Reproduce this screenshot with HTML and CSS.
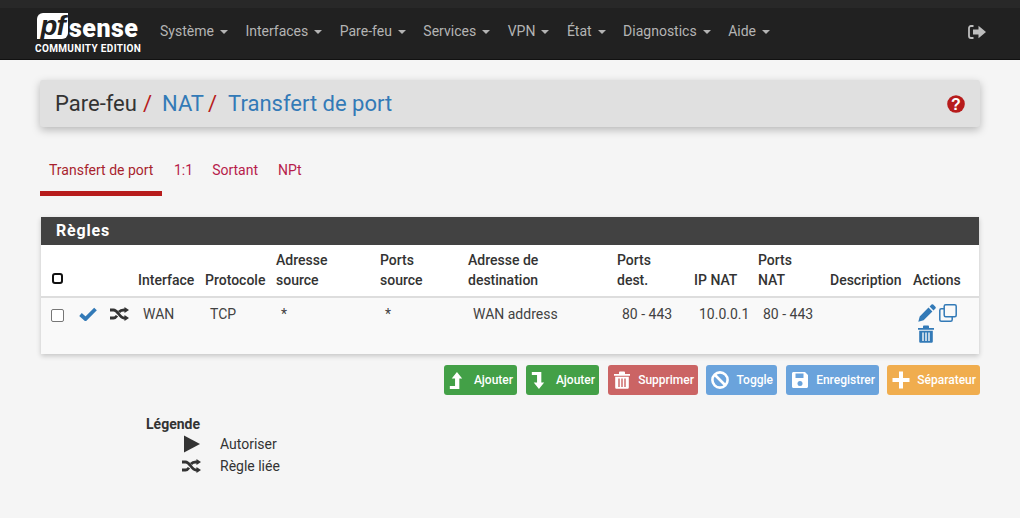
FILE: index.html
```html
<!DOCTYPE html>
<html lang="fr">
<head>
    <meta charset="UTF-8">
    <title>Transfert de port</title>
    <link rel="stylesheet" href="styles.css">
</head>
<body>
    <nav class="navbar">
        <div class="logo">
            <div class="logo-top"><span class="logo-pf">pf</span><span class="logo-sense">sense</span></div>
            <div class="logo-sub">COMMUNITY EDITION</div>
        </div>
        <ul class="menu">
            <li>Système<i class="caret"></i></li>
            <li>Interfaces<i class="caret"></i></li>
            <li>Pare-feu<i class="caret"></i></li>
            <li>Services<i class="caret"></i></li>
            <li>VPN<i class="caret"></i></li>
            <li>État<i class="caret"></i></li>
            <li>Diagnostics<i class="caret"></i></li>
            <li>Aide<i class="caret"></i></li>
        </ul>
        <svg class="logout" viewBox="0 0 18 14"><path d="M5.500 1H3C1.800 1 1 1.800 1 3v8c0 1.200.8 2 2 2h2.500" fill="none" stroke="currentColor" stroke-width="1.800"/><path d="M5 4.500h5.500V.8L18 7l-7.500 6.200V9.500H5z" fill="currentColor"/></svg>
    </nav>

    <main class="container">
        <header class="breadcrumb">
            <h1><span>Pare-feu</span><em>/</em><a>NAT</a><em>/</em><a>Transfert de port</a></h1>
            <svg class="help" viewBox="0 0 18 18"><circle cx="9" cy="9" r="8.800" fill="#b71c1c"/><text x="9" y="14.500" text-anchor="middle" class="help-mark">?</text></svg>
        </header>

        <ul class="tabs">
            <li class="active">Transfert de port</li>
            <li class="tab-short">1:1</li>
            <li>Sortant</li>
            <li>NPt</li>
        </ul>

        <section class="panel">
            <h2>Règles</h2>
            <table>
                <colgroup>
                    <col class="c-check"><col class="c-state"><col class="c-type"><col class="c-if"><col class="c-proto">
                    <col class="c-src"><col class="c-sport"><col class="c-dst"><col class="c-dport"><col class="c-ip">
                    <col class="c-nport"><col class="c-desc"><col class="c-act">
                </colgroup>
                <thead>
                    <tr>
                        <th class="first"><span class="check-all"></span></th>
                        <th></th>
                        <th></th>
                        <th>Interface</th>
                        <th>Protocole</th>
                        <th>Adresse<br>source</th>
                        <th>Ports<br>source</th>
                        <th>Adresse de<br>destination</th>
                        <th>Ports<br>dest.</th>
                        <th>IP NAT</th>
                        <th>Ports<br>NAT</th>
                        <th>Description</th>
                        <th>Actions</th>
                    </tr>
                </thead>
                <tbody>
                    <tr>
                        <td class="first"><span class="checkbox"></span></td>
                        <td class="icon-cell"><svg class="ico-check" viewBox="0 0 18 14"><path d="M1.500 7.500 6.500 12 16.500 2" fill="none" stroke="#337ab7" stroke-width="3.800"/></svg></td>
                        <td class="icon-cell"><svg class="ico-random" viewBox="0 0 19 14"><use href="#random"/></svg></td>
                        <td>WAN</td>
                        <td>TCP</td>
                        <td>*</td>
                        <td>*</td>
                        <td>WAN address</td>
                        <td>80 - 443</td>
                        <td>10.0.0.1</td>
                        <td>80 - 443</td>
                        <td></td>
                        <td class="actions">
                            <svg class="ico-act" viewBox="0 0 18 18"><path d="M13.500.6a1.200 1.200 0 0 1 1.700 0l2.200 2.200a1.200 1.200 0 0 1 0 1.700l-1.900 1.900-3.900-3.900zM10.500 3.600l3.900 3.900-8.800 8.800-5.300 1.500 1.400-5.400z" fill="#337ab7"/></svg>
                            <svg class="ico-act" viewBox="0 0 18 18"><rect x="5.200" y=".8" width="12" height="12" rx="1.500" fill="none" stroke="#337ab7" stroke-width="1.500"/><path d="M5.200 4.800H2.300C1.400 4.800.8 5.400.8 6.300v9.400c0 .9.600 1.500 1.500 1.500h9.400c.9 0 1.500-.6 1.500-1.500v-2.900" fill="none" stroke="#337ab7" stroke-width="1.500"/></svg>
                            <svg class="ico-act ico-bin" viewBox="0 0 18 18"><use href="#trash" class="trash-blue"/></svg>
                        </td>
                    </tr>
                </tbody>
            </table>
        </section>

        <div class="buttons">
            <button class="btn green"><svg class="lvl" viewBox="0 0 14 20"><path d="M8 1 13.500 8H10.500v11H.5v-3.200H6V8H2.500z" fill="#fff"/></svg>Ajouter</button>
            <button class="btn green"><svg class="lvl" viewBox="0 0 14 20"><path d="M.5 1h10v11h3L8 19 2.500 12H6V4.200H.5z" fill="#fff"/></svg>Ajouter</button>
            <button class="btn red"><svg viewBox="0 0 18 18"><use href="#trash" class="trash-white"/></svg>Supprimer</button>
            <button class="btn blue"><svg viewBox="0 0 18 18"><circle cx="9" cy="9" r="7.600" fill="none" stroke="#fff" stroke-width="2.600"/><path d="M4 4l10 10" stroke="#fff" stroke-width="2.600"/></svg>Toggle</button>
            <button class="btn blue"><svg viewBox="0 0 18 18"><path d="M2.500 1H14l3 3v11.500c0 .8-.7 1.500-1.500 1.500h-13C1.700 17 1 16.300 1 15.500v-13C1 1.700 1.700 1 2.500 1zM4.500 2.500V7h8V2.500z" fill="#fff" fill-rule="evenodd"/><circle cx="9" cy="12.500" r="2.500" fill="#6aa3dc"/></svg>Enregistrer</button>
            <button class="btn orange"><svg viewBox="0 0 18 18"><path d="M7 .5h4V7h6.500v4H11v6.500H7V11H.5V7H7z" fill="#fff"/></svg>Séparateur</button>
        </div>

        <div class="legend">
            <strong>Légende</strong>
            <div class="legend-row"><svg viewBox="0 0 18 18" class="ico-play"><path d="M2 .5 18 9 2 17.500z" fill="#333"/></svg><span>Autoriser</span></div>
            <div class="legend-row"><svg viewBox="0 0 19 14" class="ico-random"><use href="#random"/></svg><span>Règle liée</span></div>
        </div>
    </main>

    <svg class="defs">
        <defs>
            <g id="random">
                <path d="M0 3h3.500C8 3 9.500 11 14 11h1" fill="none" stroke="#333" stroke-width="2.800"/>
                <path d="M0 11h3.500c1.500 0 2.700-1 3.500-2.200M9 5c1-1.200 2.500-2 5-2h1" fill="none" stroke="#333" stroke-width="2.800"/>
                <path d="M14.500 0l4.500 3-4.500 3zM14.500 8l4.500 3-4.500 3z" fill="#333"/>
            </g>
            <g id="trash">
                <path d="M1 3h5V1.500C6 1 6.500 .5 7 .5h4c.5 0 1 .5 1 1V3h5v1.800H1z" fill="currentColor"/>
                <path d="M2.200 5.800h13.600v10.700c0 .7-.6 1.300-1.300 1.300h-11c-.7 0-1.300-.6-1.300-1.300zM5.300 7.500v8.500h1.400V7.500zM8.300 7.500v8.500h1.400V7.500zM11.300 7.500v8.500h1.400V7.500z" fill="currentColor" fill-rule="evenodd"/>
            </g>
        </defs>
    </svg>
</body>
</html>
```

FILE: styles.css
```css
* {
    box-sizing: border-box;
}
body {
    margin: 0;
    font-family: Roboto, sans-serif;
    font-size: 14px;
    color: #333;
    background-color: #f5f5f5;
}
.defs {
    display: none;
}
.navbar {
    display: flex;
    align-items: center;
    height: 60px;
    padding: 8px 34px 0 35px;
    background: linear-gradient(to bottom, #282828 0, #282828 8px, #212121 8px);
    border-bottom: 1px solid #111;
}
.logo {
    width: 107px;
    color: #fff;
}
.logo-top {
    display: flex;
    align-items: flex-end;
    height: 26px;
    margin-bottom: 4px;
    padding-left: 2px;
}
.logo-pf {
    width: 31px;
    height: 26px;
    background-color: #fff;
    border-radius: 6px 0 6px 0;
    color: #212121;
    font-family: "Liberation Sans", sans-serif;
    font-size: 28px;
    font-style: italic;
    font-weight: bold;
    line-height: 25px;
    text-align: center;
    letter-spacing: -1px;
}
.logo-sense {
    font-size: 25px;
    font-weight: 900;
    line-height: 21px;
    margin-left: 1px;
    letter-spacing: 0.5px;
}
.logo-sub {
    font-size: 10px;
    font-weight: bold;
    letter-spacing: 0.35px;
    line-height: 11px;
    white-space: nowrap;
}
.menu {
    display: flex;
    flex: 1;
    gap: 17.500px;
    list-style: none;
    margin: 0 0 6px 18px;
    padding: 0;
    color: #b4b4b4;
    font-size: 14px;
}
.caret {
    display: inline-block;
    margin-left: 6px;
    vertical-align: middle;
    border-top: 4px solid #b4b4b4;
    border-left: 4px solid transparent;
    border-right: 4px solid transparent;
}
.logout {
    width: 18px;
    height: 14px;
    margin-bottom: 4px;
    color: #bdbdbd;
}
.container {
    padding: 20px 40px 0;
}
.breadcrumb {
    display: flex;
    align-items: center;
    justify-content: space-between;
    height: 47px;
    padding: 0 15px;
    background-color: #e0e0e0;
    border-radius: 3px;
    box-shadow: 0 3px 8px rgba(0, 0, 0, 0.25);
}
.breadcrumb h1 {
    margin: 0;
    font-size: 22px;
    font-weight: normal;
}
.breadcrumb em {
    margin: 0 10px 0 6px;
    color: #b71c1c;
    font-style: normal;
}
.breadcrumb em:nth-of-type(2) {
    margin: 0 11px 0 4px;
}
.breadcrumb a {
    color: #337ab7;
}
.help {
    width: 18px;
    height: 18px;
}
.help-mark {
    fill: #fff;
    font-family: "Liberation Sans", sans-serif;
    font-size: 16px;
    font-weight: bold;
}
.tabs {
    display: flex;
    list-style: none;
    margin: 23px 0 0;
    padding: 0;
    color: #b71c4b;
}
.tabs li {
    height: 46px;
    padding: 12px 10px 0;
}
.tabs li.active {
    width: 122px;
    padding: 12px 0 0 9px;
    margin-right: 2px;
    color: #a81f2d;
    border-bottom: 5px solid #b71c1c;
    white-space: nowrap;
}
.tabs li.tab-short {
    padding-right: 9px;
}
.panel {
    margin: 21px 1px 0;
    background-color: #fff;
    box-shadow: 0 2px 5px rgba(0, 0, 0, 0.2);
}
.panel h2 {
    height: 28px;
    margin: 0;
    padding: 0 15px;
    background-color: #424242;
    color: #fff;
    font-size: 16px;
    font-weight: bold;
    line-height: 27px;
    letter-spacing: 0.8px;
}
table {
    width: 100%;
    table-layout: fixed;
    border-collapse: collapse;
}
.c-check { width: 38px; }
.c-state { width: 31px; }
.c-type { width: 28px; }
.c-if { width: 67px; }
.c-proto { width: 71px; }
.c-src { width: 104px; }
.c-sport { width: 88px; }
.c-dst { width: 149px; }
.c-dport { width: 77px; }
.c-ip { width: 64px; }
.c-nport { width: 72px; }
.c-desc { width: 83px; }
th {
    height: 52px;
    padding: 0 0 6px;
    text-align: left;
    vertical-align: bottom;
    font-weight: 500;
    line-height: 20px;
    border-bottom: 2px solid #ddd;
    white-space: nowrap;
}
th.first {
    padding-left: 11px;
}
td.first {
    padding-left: 10px;
}
td {
    height: 57px;
    padding: 6px 0 0 5px;
    vertical-align: top;
    color: #424242;
    line-height: 20px;
    background-color: #f9f9f9;
}
.check-all {
    display: block;
    width: 11px;
    height: 11px;
    margin-bottom: 6px;
    border: 2px solid #111;
    border-radius: 3px;
}
.checkbox {
    display: block;
    width: 13px;
    height: 13px;
    margin-top: 5px;
    background-color: #fff;
    border: 1px solid #767676;
    border-radius: 2px;
}
.icon-cell {
    padding-left: 0;
}
.ico-check {
    display: block;
    width: 18px;
    height: 14px;
    margin-top: 3px;
}
.ico-random {
    display: block;
    width: 19px;
    height: 14px;
}
.icon-cell .ico-random {
    margin-top: 3px;
}
.actions {
    font-size: 0;
    line-height: 0;
}
.ico-act {
    width: 18px;
    height: 18px;
    margin: 0 3px 3px 0;
}
.ico-bin {
    margin-left: -1px;
}
.trash-blue {
    color: #337ab7;
}
.trash-white {
    color: #fff;
}
.buttons {
    display: flex;
    justify-content: flex-end;
    gap: 9px;
    margin-top: 11px;
}
.btn {
    display: flex;
    align-items: center;
    justify-content: space-between;
    height: 30px;
    padding: 0 3px 0 4px;
    border: 1px solid transparent;
    border-radius: 3px;
    color: #fff;
    font-family: Roboto, sans-serif;
    font-size: 12px;
    font-weight: 500;
}
.btn svg {
    width: 18px;
    height: 18px;
}
.btn svg.lvl {
    width: 14px;
    height: 19px;
}
.btn:nth-child(1), .btn:nth-child(2) {
    width: 73px;
}
.btn:nth-child(3) {
    width: 90px;
}
.btn:nth-child(4) {
    width: 71px;
    margin-left: -1px;
}
.btn:nth-child(5) {
    width: 93px;
}
.btn:nth-child(6) {
    width: 93px;
    margin-left: -1px;
}
.green {
    background-color: #43a047;
}
.red {
    background-color: #cb6464;
}
.blue {
    background-color: #6aa3dc;
}
.orange {
    background-color: #f0ad4e;
}
.legend {
    margin: 20px 0 0 106px;
}
.legend strong {
    display: block;
    font-weight: bold;
    line-height: 18px;
}
.legend-row {
    display: flex;
    align-items: center;
    height: 22px;
    padding-left: 36px;
}
.legend-row svg {
    margin-right: 19px;
}
.ico-play {
    width: 18px;
    height: 18px;
}
.legend-row .ico-play {
    margin-right: 20px;
}
```
